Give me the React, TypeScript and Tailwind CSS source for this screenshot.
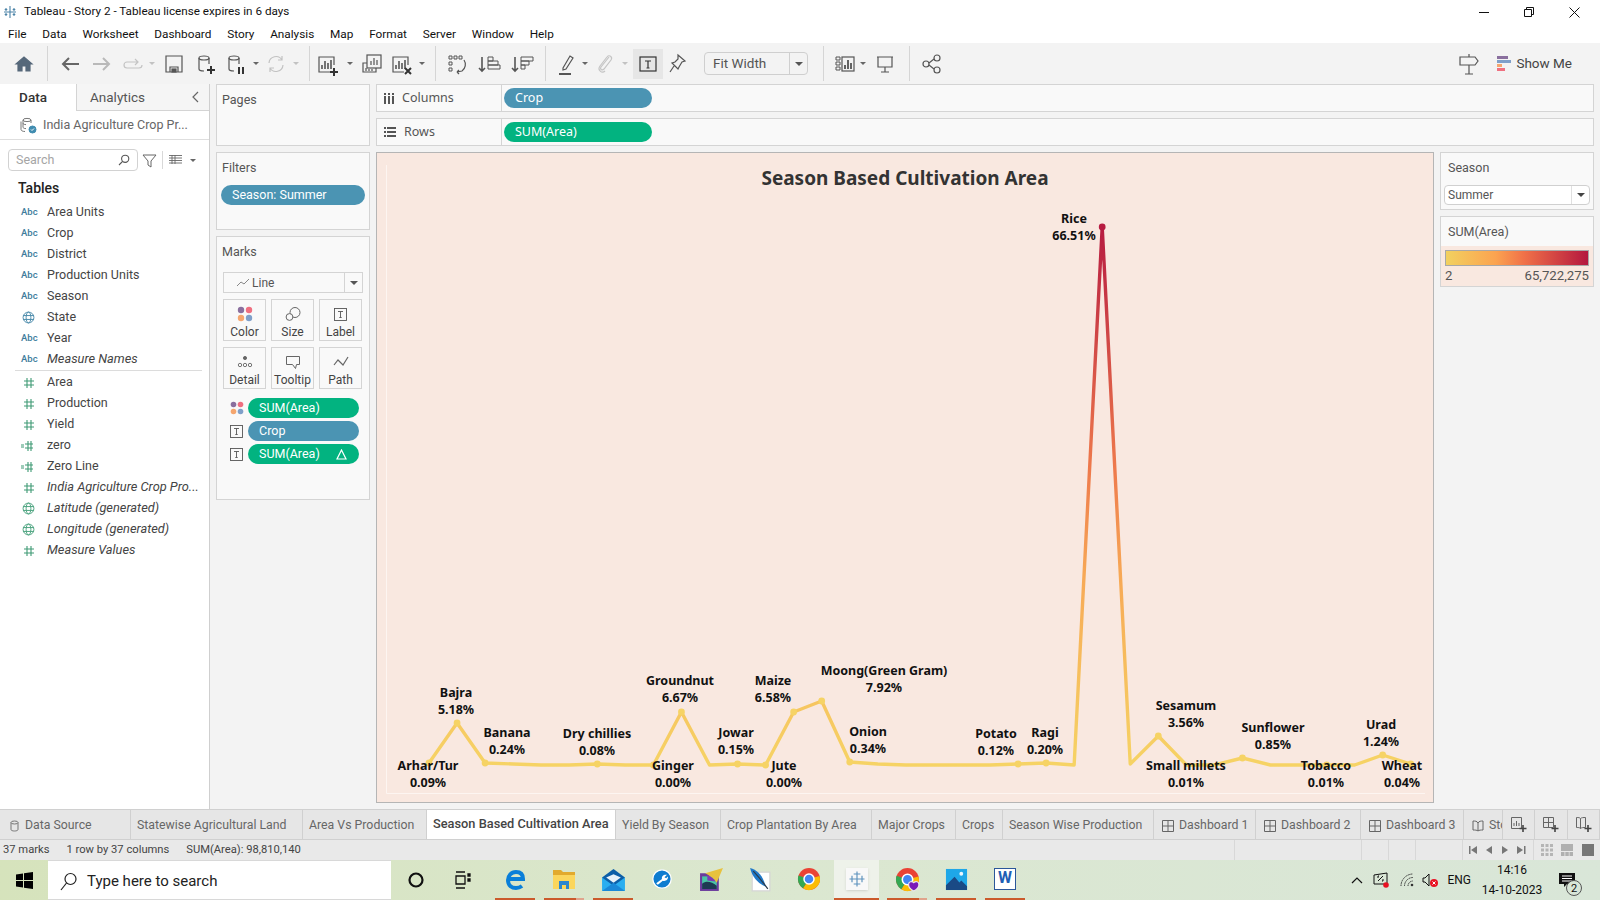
import type { ReactNode } from 'react'

const ui = 'font-["Roboto","Liberation_Sans",sans-serif]'

// ---- chart data, page coordinates taken from the reference
const xAt = (i: number) => 429 + i * 28.05
const ys = [763, 723, 763, 764, 765, 765, 764, 765, 765, 712, 765, 764, 765, 712, 701, 762, 764, 765, 765, 765, 765, 764, 763, 765, 227, 764, 736, 765, 765, 758, 765, 765, 765, 765, 755, 764]
const dots = [0, 1, 2, 6, 8, 9, 11, 12, 13, 14, 15, 21, 22, 24, 26, 29, 32, 34, 35]
const labels = [
  { name: 'Arhar/Tur', pct: '0.09%', x: 428, y: 765 },
  { name: 'Bajra', pct: '5.18%', x: 456, y: 692 },
  { name: 'Banana', pct: '0.24%', x: 507, y: 732 },
  { name: 'Dry chillies', pct: '0.08%', x: 597, y: 733 },
  { name: 'Ginger', pct: '0.00%', x: 673, y: 765 },
  { name: 'Groundnut', pct: '6.67%', x: 680, y: 680 },
  { name: 'Jowar', pct: '0.15%', x: 736, y: 732 },
  { name: 'Jute', pct: '0.00%', x: 784, y: 765 },
  { name: 'Maize', pct: '6.58%', x: 773, y: 680 },
  { name: 'Moong(Green Gram)', pct: '7.92%', x: 884, y: 670 },
  { name: 'Onion', pct: '0.34%', x: 868, y: 731 },
  { name: 'Potato', pct: '0.12%', x: 996, y: 733 },
  { name: 'Ragi', pct: '0.20%', x: 1045, y: 732 },
  { name: 'Rice', pct: '66.51%', x: 1074, y: 218 },
  { name: 'Sesamum', pct: '3.56%', x: 1186, y: 705 },
  { name: 'Small millets', pct: '0.01%', x: 1186, y: 765 },
  { name: 'Sunflower', pct: '0.85%', x: 1273, y: 727 },
  { name: 'Tobacco', pct: '0.01%', x: 1326, y: 765 },
  { name: 'Urad', pct: '1.24%', x: 1381, y: 724 },
  { name: 'Wheat', pct: '0.04%', x: 1402, y: 765 },
]

const dims = [
  { t: 'Area Units', k: 'abc' },
  { t: 'Crop', k: 'abc' },
  { t: 'District', k: 'abc' },
  { t: 'Production Units', k: 'abc' },
  { t: 'Season', k: 'abc' },
  { t: 'State', k: 'geoB' },
  { t: 'Year', k: 'abc' },
  { t: 'Measure Names', k: 'abc', i: true },
]
const meas = [
  { t: 'Area', k: 'hash' },
  { t: 'Production', k: 'hash' },
  { t: 'Yield', k: 'hash' },
  { t: 'zero', k: 'calc' },
  { t: 'Zero Line', k: 'calc' },
  { t: 'India Agriculture Crop Pro...', k: 'hash', i: true },
  { t: 'Latitude (generated)', k: 'geo', i: true },
  { t: 'Longitude (generated)', k: 'geo', i: true },
  { t: 'Measure Values', k: 'hash', i: true },
]

function Svg({ children, s = 24, v = 24, cls = '' }: { children: ReactNode; s?: number; v?: number; cls?: string }) {
  return (
    <svg width={s} height={s} viewBox={`0 0 ${v} ${v}`} fill="none" stroke="#555" strokeWidth="1.2" className={`shrink-0 ${cls}`}>
      {children}
    </svg>
  )
}

// small toolbar caret keeps an 8px slot
const Caret = ({ cls = '', c = 'border-t-[#666]' }: { cls?: string; c?: string }) => (
  <div className={`flex w-2 shrink-0 justify-center ${cls}`}>
    <div className={`h-0 w-0 border-x-[3px] border-t-[3px] border-x-transparent ${c}`} />
  </div>
)
const BigCaret = ({ c = 'border-t-[#555]' }: { c?: string }) => (
  <div className={`h-0 w-0 shrink-0 border-x-4 border-t-4 border-x-transparent ${c}`} />
)
const Sep = ({ cls }: { cls: string }) => <div className={`h-[35px] w-px shrink-0 bg-[#d5d5d5] ${cls}`} />

function Bars({ x = 5 }: { x?: number }) {
  return (
    <>
      <path d={`M${x + 13} 13V5H${x - 2}v15h11`} />
      <path d={`M${x + 1} 17v-4M${x + 4} 17v-8M${x + 7} 17v-6M${x + 10} 17v-9`} strokeWidth="1.6" />
    </>
  )
}

function Drum() {
  return (
    <>
      <ellipse cx="10" cy="6" rx="5" ry="2" />
      <path d="M5 6v11c0 1 2 2 5 2M15 6v6" />
    </>
  )
}

function Toolbar() {
  return (
    <div className="flex h-[41px] items-center bg-[#f3f3f3] pl-3">
      <Svg>
        <path d="M4 12 12 5l8 7h-2v7h-4v-5h-4v5H6v-7z" fill="#56687a" stroke="#56687a" />
      </Svg>
      <Sep cls="ml-[11px]" />
      <Svg cls="ml-[10px]">
        <path d="M21 12H5M11 6l-6 6 6 6" stroke="#666" strokeWidth="2" />
      </Svg>
      <Svg cls="ml-2">
        <path d="M3 12h16M13 6l6 6-6 6" stroke="#b9b9b9" strokeWidth="2" />
      </Svg>
      <Svg cls="ml-[7px]">
        <path d="M17 10H6a3 3 0 0 0 0 6h12a3 3 0 0 0 3-3M14 7l3 3-3 3" stroke="#c4c4c4" />
      </Svg>
      <Caret cls="ml-[3px]" c="border-t-[#c2c2c2]" />
      <Svg cls="ml-[6px]">
        <path d="M4 4h16v16H4zM8 20v-5h8v5" stroke="#555" />
        <rect x="10" y="17" width="4" height="3" fill="#555" />
      </Svg>
      <Svg cls="ml-2">
        <Drum />
        <path d="M17 14v8M13 18h8" strokeWidth="2" stroke="#333" />
      </Svg>
      <Svg cls="ml-[6px]">
        <Drum />
        <path d="M15 15v7M19 15v7" strokeWidth="2" stroke="#333" />
      </Svg>
      <Caret cls="ml-1" />
      <Svg cls="ml-1">
        <path d="M5 11a7 7 0 0 1 13-3M19 13a7 7 0 0 1-13 3M18 4v4h-4M6 20v-4h4" stroke="#c2c2c2" />
      </Svg>
      <Caret cls="ml-1" c="border-t-[#c2c2c2]" />
      <Sep cls="ml-[9px]" />
      <Svg cls="ml-[6px]">
        <Bars />
        <path d="M18 16v8M14 20h8" strokeWidth="2" stroke="#333" />
      </Svg>
      <Caret cls="ml-[6px]" />
      <Svg cls="ml-[6px]">
        <rect x="7" y="3" width="14" height="13" fill="#f3f3f3" />
        <path d="M11 13V9M14 13V6M17 13V8" />
        <path d="M7 11H3v9h13v-4M6 19v-3M9 19v-2M12 19v-2" />
      </Svg>
      <Svg cls="ml-[6px]">
        <Bars />
        <path d="M15 16l6 6M21 16l-6 6" strokeWidth="2" stroke="#333" />
      </Svg>
      <Caret cls="ml-1" />
      <Sep cls="ml-[9px]" />
      <Svg cls="ml-[9px]">
        <path d="M4 4h3v3H4zM9 4h3v3H9zM14 4h3v3h-3zM4 10h3v3H4zM4 16h3v3H4z" strokeWidth="1" />
        <path d="M19 8a8 8 0 0 1-2 11l-5 1M12 20l2-2M12 20l2 2" />
      </Svg>
      <Svg cls="ml-2">
        <path d="M5 5v14M2 16l3 3 3-3" strokeWidth="1.6" />
        <path d="M11 5h5v4h-5zM11 9h10v4H11zM11 13h12v4H11z" strokeWidth="1" />
      </Svg>
      <Svg cls="ml-[9px]">
        <path d="M5 5v14M2 16l3 3 3-3" strokeWidth="1.6" />
        <path d="M11 5h12v4H11zM11 9h8v4h-8zM11 13h4v4h-4z" strokeWidth="1" />
      </Svg>
      <Sep cls="ml-[11px]" />
      <Svg cls="ml-[9px]">
        <path d="m8 16 7-12 3 2-7 11-3 1z" />
        <path d="M4 22h12" stroke="#555" strokeWidth="2" />
      </Svg>
      <Caret cls="ml-0.5" />
      <Svg cls="ml-1">
        <path d="M16 5 8 15c-1.500 2 1 4 3 2l7-9c2-3-2-6-4-3l-7 9c-3 4 2 8 5 5" stroke="#c4c4c4" />
      </Svg>
      <Caret cls="ml-1" c="border-t-[#c2c2c2]" />
      <div className="ml-1 flex h-[30px] w-[30px] shrink-0 items-center justify-center bg-[#e6e6e6]">
        <Svg s={18} v={18}>
          <rect x="1" y="2" width="16" height="14" stroke="#333" />
          <path d="M6 6h6M9 6v7M7.500 13h3" stroke="#333" />
        </Svg>
      </div>
      <Svg cls="ml-0.5">
        <path d="m13 3 7 6-3 1-3 5-1 2-6-6 3-1 3-3zM9 14l-4 6" />
      </Svg>
      <div className={`ml-[15px] flex h-[23px] w-[104px] shrink-0 items-center rounded-sm border border-[#cfcfcf] text-[13.5px] text-[#555] ${ui}`}>
        <span className="flex-1 pl-2">Fit Width</span>
        <div className="flex h-full w-[18px] items-center justify-center border-l border-[#cfcfcf]">
          <BigCaret />
        </div>
      </div>
      <Sep cls="ml-[15px]" />
      <Svg cls="ml-[9px]">
        <path d="M3 5h4v3H3zM3 10h4v3H3zM3 15h4v3H3z" strokeWidth="1" />
        <rect x="9" y="5" width="12" height="14" />
        <path d="M12 17v-4M15 17V8M18 17v-6" strokeWidth="1.8" />
      </Svg>
      <Caret cls="ml-0.5" />
      <Svg cls="ml-[6px]">
        <path d="M4 5h16M5 5v10h14V5M12 15v5M8 20h8" />
      </Svg>
      <Sep cls="ml-3" />
      <Svg cls="ml-[10px]">
        <circle cx="6" cy="12" r="3" />
        <circle cx="17" cy="6" r="3" />
        <circle cx="17" cy="18" r="3" />
        <path d="m9 11 5-4M9 13l5 4" />
      </Svg>
      <div className="flex-1" />
      <Svg>
        <path d="M12 2v3M12 13v9M8 22h8M3 5h15l3 4-3 4H3z" />
      </Svg>
      <div className="ml-4 mr-[28px] flex items-center gap-[5px]">
        <svg width="14" height="16" viewBox="0 0 14 16" className="shrink-0">
          <rect y="0" width="11" height="3" fill="#8a6f9e" />
          <rect y="4" width="14" height="3" fill="#7f9fc9" />
          <rect y="8" width="5" height="3" fill="#f5a66f" />
          <rect y="12" width="8" height="3" fill="#ef7080" />
        </svg>
        <span className={`text-[13.5px] text-[#444] ${ui}`}>Show Me</span>
      </div>
    </div>
  )
}

function FieldIcon({ k }: { k: string }) {
  if (k === 'abc') return <span className="w-[16px] text-[9.5px] font-medium text-[#3d7c9c]">Abc</span>
  if (k === 'geo' || k === 'geoB') {
    const c = k === 'geo' ? '#4ca37f' : '#4b8bab'
    return (
      <svg width="13" height="13" viewBox="0 0 12 12" fill="none" stroke={c} strokeWidth="0.9" className="ml-px">
        <circle cx="6" cy="6" r="5" />
        <ellipse cx="6" cy="6" rx="2.2" ry="5" />
        <path d="M1 4.200h10M1 7.800h10" />
      </svg>
    )
  }
  const calc = k === 'calc'
  return (
    <svg width="16" height="12" viewBox="0 0 16 12" fill="none" stroke="#3f9a74" strokeWidth="1.1">
      {calc ? <path d="M0 5h3M0 7h3M7 1v10M10 1v10M4 4h8M4 8h8" /> : <path d="M6 1v10M10 1v10M3 4h10M3 8h10" />}
    </svg>
  )
}

function Field({ t, k, i }: { t: string; k: string; i?: boolean }) {
  return (
    <div className="flex h-[21px] items-center">
      <div className="flex w-[47px] shrink-0 items-center justify-start pl-[21px]">
        <FieldIcon k={k} />
      </div>
      <span className={`whitespace-nowrap text-[#444] ${i ? '-mt-[2px] text-[12.8px] italic' : 'text-[12.5px]'}`}>{t}</span>
    </div>
  )
}

function Sidebar() {
  return (
    <aside className={`flex w-[210px] shrink-0 flex-col border-r border-[#cfcfcf] bg-white ${ui}`}>
      <div className="flex h-[27px] shrink-0 bg-[#f5f5f5]">
        <div className="flex w-[77px] items-center justify-center border-r border-[#d4d4d4] bg-white pr-[10px] text-[13.5px] font-medium text-[#333]">
          Data
        </div>
        <div className="flex flex-1 items-center justify-between border-b border-[#d4d4d4] pl-[13px] pr-[9px] text-[13.5px] text-[#555]">
          Analytics
          <svg width="8" height="12" viewBox="0 0 8 12" fill="none" stroke="#666" strokeWidth="1.2">
            <path d="M6 1 1 6l5 5" />
          </svg>
        </div>
      </div>
      <div className="flex h-[29px] shrink-0 items-center gap-[6px] border-b border-[#dedede] pl-5 text-[12.5px] text-[#666]">
        <svg width="17" height="17" viewBox="0 0 17 17" fill="none" stroke="#777" strokeWidth="1">
          <ellipse cx="7" cy="3" rx="4" ry="1.600" />
          <path d="M3 3v7c0 1 1 1.600 3 1.600M11 3v3M3 6c0 1 1 1.600 3 1.600M1 4.500v8c0 1 1.500 2 4 2" />
          <circle cx="12.500" cy="12.500" r="3.500" fill="#3f8cb0" stroke="#3f8cb0" />
          <path d="m11 12.500 1 1 2-2" stroke="#fff" />
        </svg>
        India Agriculture Crop Pr...
      </div>
      <div className="flex h-[34px] shrink-0 items-center pl-2 pt-[6px]">
        <div className="flex h-[22px] w-[130px] items-center justify-between rounded-sm border border-[#d2d2d2] px-[7px] text-[12.5px] text-[#a5a5a5]">
          Search
          <svg width="12" height="12" viewBox="0 0 12 12" fill="none" stroke="#555" strokeWidth="1.1">
            <circle cx="7.2" cy="4.8" r="3.6" />
            <path d="M4.6 7.4 1 11" />
          </svg>
        </div>
        <svg width="15" height="15" viewBox="0 0 15 15" fill="none" stroke="#666" className="ml-[4px]">
          <path d="M1 2h13L9 8v6l-3-2V8z" />
        </svg>
        <div className="ml-[5px] h-[18px] w-px bg-[#d8d8d8]" />
        <svg width="13" height="10" viewBox="0 0 13 10" fill="none" stroke="#666" strokeWidth="0.9" className="ml-[6px]">
          <path d="M0 .5h13M0 3h13M0 5.500h13M0 8h13M3 0v9M6 0v9" />
        </svg>
        <Caret cls="ml-[7px]" />
      </div>
      <div className="mt-[3px] h-[22px] pl-[18px] text-[14px] font-medium leading-[22px] text-[#222]">Tables</div>
      <div className="mt-[3px] flex flex-col">
        {dims.map(f => <Field key={f.t} {...f} />)}
      </div>
      <div className="ml-[15px] mr-[7px] border-t border-[#dcdcdc]" />
      <div className="mt-px flex flex-col">
        {meas.map(f => <Field key={f.t} {...f} />)}
      </div>
    </aside>
  )
}

const Panel = ({ title, cls, pad = 'pl-[7px]', children }: { title: string; cls: string; pad?: string; children?: ReactNode }) => (
  <div className={`border border-[#d4d4d4] bg-[#f9f9f9] ${cls}`}>
    <div className={`pt-[5px] text-[12.5px] leading-[20px] text-[#555] ${pad}`}>{title}</div>
    {children}
  </div>
)

const Pill = ({ text, green, cls = '', children }: { text: string; green?: boolean; cls?: string; children?: ReactNode }) => (
  <div className={`flex h-5 items-center justify-between rounded-full pl-[11px] pr-3 pt-px text-[12.5px] text-white ${green ? 'bg-[#02b380]' : 'bg-[#4b94b3]'} ${cls}`}>
    {text}
    {children}
  </div>
)

const Dots = ({ s }: { s: number }) => (
  <svg width={s} height={s} viewBox="0 0 16 16" className="shrink-0">
    <circle cx="4" cy="4" r="3.2" fill="#8a6f9e" />
    <circle cx="12" cy="4" r="3.2" fill="#ef6f80" />
    <circle cx="4" cy="12" r="3.2" fill="#f5a66f" />
    <circle cx="12" cy="12" r="3.2" fill="#7f9fc9" />
  </svg>
)

const TBox = ({ s = 13 }: { s?: number }) => (
  <svg width={s} height={s} viewBox="0 0 13 13" fill="none" stroke="#555" strokeWidth="0.9" className="shrink-0">
    <rect x=".5" y=".5" width="12" height="12" />
    <path d="M4 3.500h5M6.500 3.500v6M5.300 9.500h2.400" />
  </svg>
)

function MarkCard({ label, children }: { label: string; children: ReactNode }) {
  return (
    <div className="flex h-[42px] flex-col items-center justify-end border border-[#d4d4d4] text-[12px] text-[#444]">
      <div className="flex h-[22px] items-center">{children}</div>
      <span className="leading-[15px]">{label}</span>
    </div>
  )
}

function Cards() {
  return (
    <div className={`flex w-[154px] shrink-0 flex-col gap-[6px] ${ui}`}>
      <Panel title="Pages" cls="h-[62px]" pad="pl-[5px]" />
      <Panel title="Filters" cls="h-[78px]" pad="pl-[5px]">
        <Pill text="Season: Summer" cls="mx-1 mt-[7px]" />
      </Panel>
      <Panel title="Marks" cls="h-[264px]" pad="pl-[5px]">
        <div className="mx-[6px] mt-[10px] flex h-[21px] items-center border border-[#d4d4d4] bg-[#f9f9f9] text-[12px] text-[#555]">
          <svg width="14" height="10" viewBox="0 0 14 10" fill="none" stroke="#888" className="ml-3 mr-[2px]">
            <path d="m1 8 4-4 3 2 5-5" />
          </svg>
          <span className="flex-1">Line</span>
          <div className="flex h-full w-[18px] items-center justify-center border-l border-[#d4d4d4]">
            <BigCaret />
          </div>
        </div>
        <div className="mx-[6px] mt-[6px] grid grid-cols-[43px_43px_43px] gap-x-[5px] gap-y-[6px]">
          <MarkCard label="Color"><Dots s={16} /></MarkCard>
          <MarkCard label="Size">
            <svg width="16" height="16" viewBox="0 0 16 16" fill="none" stroke="#666">
              <circle cx="10" cy="6.500" r="5" />
              <circle cx="4.500" cy="11" r="3.400" fill="#f9f9f9" />
            </svg>
          </MarkCard>
          <MarkCard label="Label"><TBox /></MarkCard>
          <MarkCard label="Detail">
            <svg width="16" height="14" viewBox="0 0 16 14" fill="none" stroke="#666" strokeWidth="0.9">
              <circle cx="8" cy="3" r="1.600" fill="#666" />
              <circle cx="3" cy="10" r="1.700" />
              <circle cx="8" cy="10" r="1.700" />
              <circle cx="13" cy="10" r="1.700" />
            </svg>
          </MarkCard>
          <MarkCard label="Tooltip">
            <svg width="16" height="15" viewBox="0 0 16 15" fill="none" stroke="#666">
              <path d="M1.500 1.500h13v8h-3l-1 4-3-4h-6z" />
            </svg>
          </MarkCard>
          <MarkCard label="Path">
            <svg width="16" height="12" viewBox="0 0 16 12" fill="none" stroke="#666" strokeWidth="1.2">
              <path d="m1 9 4-5 5 5 5-8" />
            </svg>
          </MarkCard>
        </div>
        <div className="ml-[13px] mr-[10px] mt-[9px] flex flex-col gap-[3px]">
          <div className="flex items-center gap-[4px]">
            <Dots s={14} />
            <Pill text="SUM(Area)" green cls="flex-1" />
          </div>
          <div className="flex items-center gap-[4px]">
            <TBox />
            <Pill text="Crop" cls="ml-px flex-1" />
          </div>
          <div className="flex items-center gap-[4px]">
            <TBox />
            <Pill text="SUM(Area)" green cls="ml-px flex-1">
              <svg width="11" height="11" viewBox="0 0 11 11" fill="none" stroke="#fff" strokeWidth="1.2">
                <path d="M5.500 1 10 10H1z" />
              </svg>
            </Pill>
          </div>
        </div>
      </Panel>
    </div>
  )
}

function Shelf({ name, icon, pill, green }: { name: string; icon: ReactNode; pill: string; green?: boolean }) {
  return (
    <div className="flex h-[28px] items-center border border-[#d4d4d4] bg-[#f9f9f9]">
      <div className="flex h-full w-[125px] shrink-0 items-center gap-[8px] border-r border-[#d4d4d4] pl-[7px] text-[12.5px] text-[#555]">
        {icon}
        <span>{name}</span>
      </div>
      <Pill text={pill} green={green} cls="ml-[2px] w-[148px]" />
    </div>
  )
}

function Chart() {
  const points = ys.map((y, i) => `${xAt(i)},${y}`).join(' ')
  return (
    <div className="h-[651px] w-[1058px] shrink-0 border border-[#b5b5b5] bg-[#f9e8e0]">
      <div className="relative h-full w-full overflow-hidden">
        <div className={`pt-[11px] text-center text-[19px] font-bold leading-[28px] text-[#333] font-["Noto_Sans",sans-serif]`}>
          Season Based Cultivation Area
        </div>
        <svg width="1056" height="649" viewBox="377 153 1056 649" className="absolute inset-0">
          <defs>
            <linearGradient id="heat" gradientUnits="userSpaceOnUse" x1="0" y1="765" x2="0" y2="227">
              <stop offset="0" stopColor="#f6d365" />
              <stop offset="0.35" stopColor="#f7a956" />
              <stop offset="0.55" stopColor="#ee7a4c" />
              <stop offset="1" stopColor="#b71c41" />
            </linearGradient>
          </defs>
          <path d="M386.500 165v628.500H1425" stroke="#fdf5f1" fill="none" />
          <polyline points={points} fill="none" stroke="url(#heat)" strokeWidth="3.4" strokeLinejoin="round" />
          {dots.map(i => (
            <circle key={i} cx={xAt(i)} cy={ys[i]} r="3.400" fill={i === 24 ? '#b71c41' : '#f6d365'} />
          ))}
        </svg>
        {labels.map(l => (
          <div
            key={l.name}
            className={`absolute -translate-x-1/2 whitespace-nowrap text-center text-[12.5px] font-bold leading-[17px] text-[#111] font-["Noto_Sans",sans-serif]`}
            style={{ left: l.x - 377, top: l.y - 8 - 153 }}
          >
            {l.name}
            <br />
            {l.pct}
          </div>
        ))}
      </div>
    </div>
  )
}

function Legends() {
  return (
    <div className={`flex w-[154px] shrink-0 flex-col gap-[6px] ${ui}`}>
      <Panel title="Season" cls="h-[58px]">
        <div className="mx-[3px] mt-[7px] flex h-[20px] items-center rounded-sm border border-[#d0d0d0] bg-white pl-[3px] text-[12px] text-[#555]">
          <span className="flex-1">Summer</span>
          <div className="flex h-full w-[18px] items-center justify-center border-l border-[#e0e0e0]">
            <BigCaret c="border-t-[#444]" />
          </div>
        </div>
      </Panel>
      <div className="h-[71px] border border-[#d4d4d4] bg-[#f9f9f9]">
        <div className="h-[29px] pl-[7px] pt-[5px] text-[12.5px] leading-[20px] text-[#555]">SUM(Area)</div>
        <div className="h-[40px] bg-[#f9e8e0] px-[4px] pt-[4px]">
          <div className="h-[16px] border border-[#a8a8a8] bg-[linear-gradient(90deg,#f2d160,#fba350_35%,#f07148_55%,#b4173f)]" />
          <div className="mt-[2px] flex justify-between text-[13.2px] leading-[16px] text-[#555]">
            <span>2</span>
            <span>65,722,275</span>
          </div>
        </div>
      </div>
    </div>
  )
}

const tabs = [
  { t: 'Data Source', w: 'w-[131px]', icon: 'ds' },
  { t: 'Statewise Agricultural Land', w: 'w-[172px]' },
  { t: 'Area Vs Production', w: 'w-[124px]' },
  { t: 'Season Based Cultivation Area', w: 'w-[189px]', active: true },
  { t: 'Yield By Season', w: 'w-[105px]' },
  { t: 'Crop Plantation By Area', w: 'w-[151px]' },
  { t: 'Major Crops', w: 'w-[84px]' },
  { t: 'Crops', w: 'w-[47px]' },
  { t: 'Season Wise Production', w: 'w-[151px]' },
  { t: 'Dashboard 1', w: 'w-[102px]', icon: 'db' },
  { t: 'Dashboard 2', w: 'w-[105px]', icon: 'db' },
  { t: 'Dashboard 3', w: 'w-[103px]', icon: 'db' },
  { t: 'Story 2', w: 'w-[39px]', icon: 'st' },
]

function TabIcon({ k }: { k: string }) {
  if (k === 'ds')
    return (
      <svg width="9" height="12" viewBox="0 0 9 12" fill="none" stroke="#777" className="mr-[6px] shrink-0">
        <ellipse cx="4.500" cy="2.500" rx="3.500" ry="1.500" />
        <path d="M1 2.500v7c0 2 7 2 7 0v-7" />
      </svg>
    )
  if (k === 'db')
    return (
      <svg width="12" height="12" viewBox="0 0 12 12" fill="none" stroke="#666" className="mr-[5px] shrink-0">
        <path d="M.5.5h11v11H.5zM6 .5v11M.5 6h11" />
      </svg>
    )
  return (
    <svg width="12" height="12" viewBox="0 0 12 12" fill="none" stroke="#666" className="mr-[5px] shrink-0">
      <path d="M1 1c2 0 4 0 5 2 1-2 3-2 5-2v9c-2 0-4 0-5 1-1-1-3-1-5-1zM6 3v8" />
    </svg>
  )
}

function TabBar() {
  return (
    <div className={`flex h-[31px] border-y border-[#d0d0d0] bg-[#e6e6e6] text-[12.3px] text-[#666] ${ui}`}>
      {tabs.map(t => (
        <div
          key={t.t}
          className={`flex h-full shrink-0 items-center overflow-hidden whitespace-nowrap border-r border-[#d0d0d0] ${t.icon ? (t.icon === 'ds' ? 'pl-[10px]' : 'pl-2') : 'pl-[6px]'} ${t.w} ${t.active ? 'bg-white pb-[2px] text-[12.8px] font-medium text-[#444]' : 'pt-[2px]'}`}
        >
          {t.icon && <TabIcon k={t.icon} />}
          {t.t}
        </div>
      ))}
      {['a', 'b', 'c'].map(k => (
        <div key={k} className="flex h-full flex-1 items-center justify-center border-r border-[#d0d0d0]">
          <svg width="17" height="17" viewBox="0 0 17 17" fill="none" stroke="#666">
            {k === 'a' && <path d="M1.500 1.500h10v11h-10zM4 10V7M6.500 10V5M9 10V7" />}
            {k === 'b' && <path d="M1.500 1.500h10v10h-10zM6.500 1.500v10M1.500 6.500h10" />}
            {k === 'c' && <path d="M1.500 1.500c2 0 3 0 4 1 1-1 3-1 5-1v10c-2 0-4 0-5 1-1-1-2-1-4-1zM5.500 2.500v10" />}
            <path d="M13 9v7M9.500 12.500h7" stroke="#444" strokeWidth="1.600" />
          </svg>
        </div>
      ))}
    </div>
  )
}

function StatusBar() {
  return (
    <div className={`flex h-[20px] items-center bg-[#e9e9e9] text-[11.2px] text-[#444] ${ui}`}>
      <span className="ml-[3px]">37 marks</span>
      <span className="ml-[17px]">1 row by 37 columns</span>
      <span className="ml-[17px]">SUM(Area): 98,810,140</span>
      <div className="flex-1" />
      <div className="h-full w-px bg-[#d8d8d8]" />
      <div className="ml-[126px] h-full w-px bg-[#d8d8d8]" />
      <div className="ml-[26px] h-full w-px bg-[#d8d8d8]" />
      <div className="ml-[26px] h-full w-px bg-[#d8d8d8]" />
      <div className="ml-[46px] h-full w-px bg-[#d8d8d8]" />
      <svg width="60" height="12" viewBox="0 0 60 12" fill="#777" className="ml-[3px] shrink-0">
        <path d="M3 2h1.500v8H3zM11 2v8L5 6zM26 2v8l-6-4zM36 2v8l6-4zM51 2v8l6-4zM58 2h1.500v8H58z" />
      </svg>
      <div className="ml-[7px] h-full w-px bg-[#d8d8d8]" />
      <svg width="12" height="12" viewBox="0 0 12 12" fill="#b5b5b5" className="ml-[7px] shrink-0">
        <path d="M0 0h3v3H0zM4.500 0h3v3h-3zM9 0h3v3H9zM0 4.500h3v3H0zM4.500 4.500h3v3h-3zM9 4.500h3v3H9zM0 9h3v3H0zM4.500 9h3v3h-3zM9 9h3v3H9z" />
      </svg>
      <svg width="12" height="12" viewBox="0 0 12 12" fill="#b0b0b0" className="ml-2 shrink-0">
        <path d="M0 0h12v7H0zM0 8h3.500v4H0zM4.300 8h3.500v4H4.300zM8.500 8H12v4H8.500z" />
      </svg>
      <div className="ml-[9px] mr-[6px] h-[12px] w-[12px] shrink-0 bg-[#777]" />
    </div>
  )
}

// a taskbar cell; lined cells carry the "running" underline, stacked ones a paler tail
function TaskCell({ cls = 'ml-[9px] w-[40px]', line, stack, children }: { cls?: string; line?: boolean; stack?: boolean; children: ReactNode }) {
  return (
    <div className={`flex h-full shrink-0 flex-col ${cls}`}>
      <div className="flex flex-1 items-center justify-center">{children}</div>
      <div className="flex h-[2px]">
        {line && <div className={`h-full bg-[#cb5a2c] ${stack ? 'w-[32px]' : 'w-full'}`} />}
        {stack && <div className="h-full flex-1 bg-[#e0a48c]" />}
      </div>
    </div>
  )
}

function ChromeIcon({ s = 24, badge }: { s?: number; badge?: boolean }) {
  return (
    <Svg s={s}>
      <circle cx="12" cy="12" r="11" fill="#ea4335" stroke="none" />
      <path d="M12 12 22.500 9A11 11 0 0 1 6 21.300z" fill="#fbbc05" stroke="none" />
      <path d="M12 12 6 21.300A11 11 0 0 1 1.500 8.500z" fill="#34a853" stroke="none" />
      <circle cx="12" cy="12" r="5" fill="#4285f4" stroke="#fff" strokeWidth="1.500" />
      {badge && <path d="M13 17c0-3 3-4 5-2 2-2 5-1 5 2s-3 5-5 6c-2-1-5-3-5-6z" fill="#7a18b8" stroke="#e8e8e8" />}
    </Svg>
  )
}

function Taskbar() {
  return (
    <div className={`flex h-[40px] items-center bg-gradient-to-r from-[#d6e3bc] via-[#dbe7d0] to-[#d9e6d8] ${ui}`}>
      <svg width="17" height="17" viewBox="0 0 17 17" fill="#000" className="ml-[16px] shrink-0">
        <path d="m0 2.500 7-1V8H0zM8 1.300 17 0v8H8zM0 9h7v6.500l-7-1zM8 9h9v8l-9-1.300z" />
      </svg>
      <div className="ml-[15px] flex h-[40px] w-[343px] shrink-0 items-center border-y border-[#d8d8d8] bg-white pl-[12px] pt-[2px] text-[15px] text-[#222]">
        <svg width="17" height="19" viewBox="0 0 17 19" fill="none" stroke="#222" strokeWidth="1.200" className="mr-[10px]">
          <circle cx="10.500" cy="7" r="5.500" />
          <path d="M6.500 11 1 18" />
        </svg>
        Type here to search
      </div>
      <svg width="16" height="16" viewBox="0 0 16 16" fill="none" stroke="#111" strokeWidth="2.200" className="ml-[17px] shrink-0">
        <circle cx="8" cy="8" r="6.500" />
      </svg>
      <svg width="16" height="18" viewBox="0 0 16 18" fill="none" stroke="#111" strokeWidth="1.300" className="ml-[31px] shrink-0">
        <path d="M1 1h9M1 17h9M1 5h9v8H1z" />
        <path d="M13 3h2v2h-2zM13 8h2v2h-2z" fill="#111" />
      </svg>
      <div className="ml-[24px] flex h-full items-center">
        <TaskCell cls="w-[40px]" line>
          <Svg s={24}>
            <path d="M7 12h13c0-5-3-7-7-7-5 0-8 4-8 8 0 6 4 8 8 8 2 0 4-.500 6-2" stroke="#0a7fd9" strokeWidth="4" />
          </Svg>
        </TaskCell>
        <TaskCell line stack>
          <Svg s={24}>
            <path d="M1 3h8l2 2h12v17H1z" fill="#e2aa2d" stroke="none" />
            <path d="M1 8h22v14H1z" fill="#fbd65c" stroke="none" />
            <path d="M7 22v-8h10v8h-3v-4h-4v4z" fill="#2a86d0" stroke="none" />
          </Svg>
        </TaskCell>
        <TaskCell line>
          <Svg s={25}>
            <path d="M1 10h22v13H1z" fill="#2aaef0" stroke="none" />
            <path d="m1 10 11-8 11 8-11 8z" fill="#0d5fa8" stroke="none" />
            <path d="m5 10 7-3 7 3-7 5z" fill="#e8f2fa" stroke="none" />
            <path d="m1 23 11-8 11 8z" fill="#1a88d8" stroke="none" />
          </Svg>
        </TaskCell>
        <TaskCell>
          <Svg s={20}>
            <circle cx="12" cy="12" r="11" fill="#0e7cd0" stroke="#fff" strokeWidth="1.500" />
            <path d="m5 17 7-5c-1-3 2-6 6-5l-3 3 2 1 2-2c1 4-3 6-6 5l-6 5z" fill="#fff" stroke="none" />
          </Svg>
        </TaskCell>
        <TaskCell>
          <Svg s={25}>
            <path d="M1 6h18v17H1z" fill="#6a3a9c" stroke="none" />
            <path d="M3 9h14v12H3z" fill="#49c7a6" stroke="none" />
            <path d="M3 16c4-3 9-2 14 2v3H3z" fill="#1d3b52" stroke="none" />
            <path d="M6 6l17-5-6 14c-3-4-7-7-11-9z" fill="#e8c23e" stroke="none" />
            <path d="M8 8c3 1 6 3 8 6l-8-1z" fill="#7d3cb5" stroke="none" />
          </Svg>
        </TaskCell>
        <TaskCell>
          <Svg s={25}>
            <path d="M4 5h17v18H4z" fill="#fff" stroke="#d5d5d5" />
            <path d="M2 1c8 2 13 9 15 18-7-3-13-9-15-18z" fill="#1f78c8" stroke="none" />
            <path d="M5 4c4 4 8 9 14 17" stroke="#2d3a4a" />
          </Svg>
        </TaskCell>
        <TaskCell><ChromeIcon /></TaskCell>
        <TaskCell cls="ml-[5px] w-[45px] bg-[#eef2ea]" line>
          <div className="flex h-[22px] w-[22px] items-center justify-center bg-[#f8f8f8] shadow-sm">
            <Svg s={20}>
              <path d="M12 3v18M3 12h18M6 8v8M4 12h4M18 8v8M16 12h4M8 6h8M12 4v4M8 18h8M12 16v4" stroke="#5d92bd" strokeWidth="1.400" />
            </Svg>
          </div>
        </TaskCell>
        <TaskCell cls="ml-[8px] w-[40px]" line stack><ChromeIcon s={25} badge /></TaskCell>
        <TaskCell line>
          <Svg s={23}>
            <path d="M1 1h22v22H1z" fill="#1ea7e8" stroke="none" />
            <path d="m1 18 9-9 5 6 2-2 6 6v4H1z" fill="#1a4a85" stroke="none" />
            <circle cx="17" cy="6" r="2" fill="#eaf6ff" stroke="none" />
          </Svg>
        </TaskCell>
        <TaskCell line>
          <div className="flex h-[22px] w-[22px] items-start justify-center border border-[#2b579a] bg-white text-[16px] font-bold leading-[18px] text-[#1f5fb5]">W</div>
        </TaskCell>
      </div>
      <div className="flex-1" />
      <svg width="12" height="8" viewBox="0 0 12 8" fill="none" stroke="#111" strokeWidth="1.200" className="shrink-0">
        <path d="m1 7 5-5 5 5" />
      </svg>
      <svg width="16" height="16" viewBox="0 0 16 16" fill="none" stroke="#111" className="ml-[10px] shrink-0">
        <path d="M1 3 14 1v11H1zM5 9l5-5M6 4H5v2M9 9h1V7" />
        <circle cx="13" cy="13" r="2.800" fill="#e81123" stroke="none" />
      </svg>
      <svg width="14" height="14" viewBox="0 0 14 14" fill="none" stroke="#333" className="ml-[11px] shrink-0">
        <path d="M1 13A12 12 0 0 1 13 1M4.500 13A8.500 8.500 0 0 1 13 4.500M8 13a5 5 0 0 1 5-5" strokeDasharray="1.500 0.800" />
        <circle cx="12" cy="12" r="1.300" fill="#333" stroke="none" />
      </svg>
      <svg width="16" height="16" viewBox="0 0 16 16" fill="none" stroke="#111" className="ml-[8px] shrink-0">
        <path d="M1 6h2l4-4v12l-4-4H1z" />
        <circle cx="12" cy="11" r="4" fill="#e81123" stroke="none" />
        <path d="m10.500 9.500 3 3M13.500 9.500l-3 3" stroke="#fff" />
      </svg>
      <span className="ml-[9px] text-[12px] text-[#111]">ENG</span>
      <div className="ml-[6px] flex w-[70px] shrink-0 flex-col items-center whitespace-nowrap text-[12px] leading-[20px] text-[#111]">
        <span>14:16</span>
        <span>14-10-2023</span>
      </div>
      <div className="relative ml-[12px] mr-[25px]">
        <svg width="16" height="14" viewBox="0 0 16 14" fill="#111" className="block shrink-0">
          <path d="M0 0h16v11H8l-3 3v-3H0z" />
          <path d="M3 3h10M3 5.500h10M3 8h10" stroke="#fff" />
        </svg>
        <div className="absolute left-[7px] top-[7px] flex h-[16px] w-[16px] items-center justify-center rounded-full border border-[#555] bg-[#d9e6d8] text-[11px] leading-none text-[#111]">2</div>
      </div>
    </div>
  )
}

export default function App() {
  return (
    <div className="flex h-[900px] w-[1600px] flex-col overflow-hidden bg-white">
      <div className={`flex h-[21px] shrink-0 items-center pl-[3px] pt-[3px] text-[11.7px] text-[#111] ${ui}`}>
        <svg width="14" height="14" viewBox="0 0 14 14" fill="none" stroke="#4c84a8" strokeWidth="1.100" className="shrink-0">
          <path d="M7 1v12M1 7h12M3 3v3M1.700 4.500h2.600M11 3v3M9.700 4.500h2.600M3 8v3M1.700 9.500h2.600M11 8v3M9.700 9.500h2.600" />
        </svg>
        <span className="ml-[7px]">Tableau - Story 2 - Tableau license expires in 6 days</span>
        <div className="flex-1" />
        <svg width="10" height="10" viewBox="0 0 10 10" stroke="#111" fill="none" className="mr-[35px]">
          <path d="M0 5.500h10" />
        </svg>
        <svg width="10" height="10" viewBox="0 0 10 10" stroke="#111" fill="none" className="mr-[35px]">
          <path d="M.5 2.500h7v7h-7zM2.500 2.500v-2h7v7h-2" />
        </svg>
        <svg width="11" height="11" viewBox="0 0 11 11" stroke="#111" fill="none" className="mr-[20px]">
          <path d="m.5.500 10 10M10.500.500l-10 10" />
        </svg>
      </div>
      <div className={`flex h-[22px] shrink-0 items-center pl-[8px] pt-[5px] text-[11.8px] text-[#111] ${ui}`}>
        <span>File</span>
        <span className="ml-[15.800px]">Data</span>
        <span className="ml-[15.800px]">Worksheet</span>
        <span className="ml-[15.800px]">Dashboard</span>
        <span className="ml-[15.800px]">Story</span>
        <span className="ml-[15.800px]">Analysis</span>
        <span className="ml-[15.800px]">Map</span>
        <span className="ml-[15.800px]">Format</span>
        <span className="ml-[15.800px]">Server</span>
        <span className="ml-[15.800px]">Window</span>
        <span className="ml-[15.800px]">Help</span>
      </div>
      <Toolbar />
      <div className="flex h-[725px] shrink-0 bg-[#f3f3f3]">
        <Sidebar />
        <div className="flex flex-1 gap-[6px] px-[6px]">
          <Cards />
          <div className="flex flex-1 flex-col gap-[6px]">
            <Shelf
              name="Columns"
              pill="Crop"
              icon={
                <svg width="10" height="11" viewBox="0 0 10 11" fill="#555">
                  <path d="M0 3h2v8H0zM4 3h2v8H4zM8 3h2v8H8zM0 0h2v2H0zM4 0h2v2H4zM8 0h2v2H8z" />
                </svg>
              }
            />
            <Shelf
              name="Rows"
              pill="SUM(Area)"
              green
              icon={
                <svg width="12" height="10" viewBox="0 0 12 10" fill="#555">
                  <path d="M0 0h2v2H0zM0 4h2v2H0zM0 8h2v2H0zM3 0h9v2H3zM3 4h9v2H3zM3 8h9v2H3z" />
                </svg>
              }
            />
            <div className="flex gap-[6px]">
              <Chart />
              <Legends />
            </div>
          </div>
        </div>
      </div>
      <TabBar />
      <StatusBar />
      <Taskbar />
    </div>
  )
}
